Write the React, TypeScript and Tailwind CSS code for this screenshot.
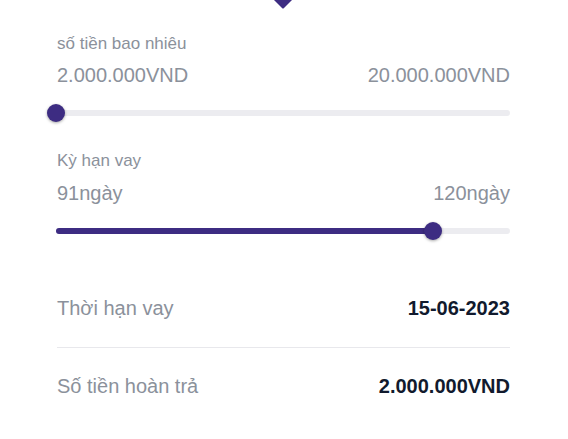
import React from 'react';

type RangeProps = {
  percent: number;
  filled?: boolean;
};

const Range: React.FC<RangeProps> = ({ percent, filled = false }) => {
  return (
    <div className="relative h-[18px] flex items-center">
      {/* Track */}
      <div className="h-[6px] w-full rounded-full bg-[#ececf0]">
        {filled && (
          <div className="h-[6px] rounded-full bg-[#3d2c82]" style={{ width: `${percent}%` }} />
        )}
      </div>
      {/* Thumb */}
      <div
        className="absolute top-1/2 h-[18px] w-[18px] -translate-x-1/2 -translate-y-1/2 rounded-full bg-[#3d2c82] shadow-[0_1px_3px_rgba(0,0,0,0.35)]"
        style={{ left: `${percent}%` }}
      />
    </div>
  );
};

type InfoRowProps = { label: string; value: string };

const InfoRow: React.FC<InfoRowProps> = ({ label, value }) => (
  <div className="flex items-center justify-between leading-[28px]">
    <span className="text-[20px] text-[#8b919b]">{label}</span>
    <span className="text-[20px] font-bold text-[#111a2d]">{value}</span>
  </div>
);

export default function App() {
  return (
    <div
      className="relative w-[568px] h-[439px] bg-white overflow-hidden"
      style={{ fontFamily: '"Liberation Sans", Arial, sans-serif' }}
    >
      {/* pointer from the card above */}
      <div className="flex justify-center h-0">
        <svg width="18" height="9" viewBox="0 0 18 9" className="ml-[-2px]">
          <path d="M0 0 H18 L10 8 Q9 9 8 8 Z" fill="#3d2c82" />
        </svg>
      </div>

      <div className="pl-[57px] pr-[58px] pt-[31px]">
        {/* Amount */}
        <div className="text-[17px] leading-[26px] text-[#8b919b]">số tiền bao nhiêu</div>
        <div className="mt-[4px] flex justify-between text-[20px] leading-[28px] text-[#8b919b]">
          <span>2.000.000VND</span>
          <span>20.000.000VND</span>
        </div>
        <div className="mt-[15px] -ml-px">
          <Range percent={0} />
        </div>

        {/* Term */}
        <div className="mt-[26px] text-[17px] leading-[26px] text-[#8b919b]">Kỳ hạn vay</div>
        <div className="mt-[5px] flex justify-between text-[20px] leading-[28px] text-[#8b919b]">
          <span>91ngày</span>
          <span>120ngày</span>
        </div>
        <div className="mt-[15px] -ml-px">
          <Range percent={83} filled />
        </div>

        {/* Summary */}
        <div className="mt-[54px]">
          <InfoRow label="Thời hạn vay" value="15-06-2023" />
        </div>
        <div className="mt-[25px] h-px bg-[#e8e8ec]" />
        <div className="mt-[24px]">
          <InfoRow label="Số tiền hoàn trả" value="2.000.000VND" />
        </div>
      </div>
    </div>
  );
}
